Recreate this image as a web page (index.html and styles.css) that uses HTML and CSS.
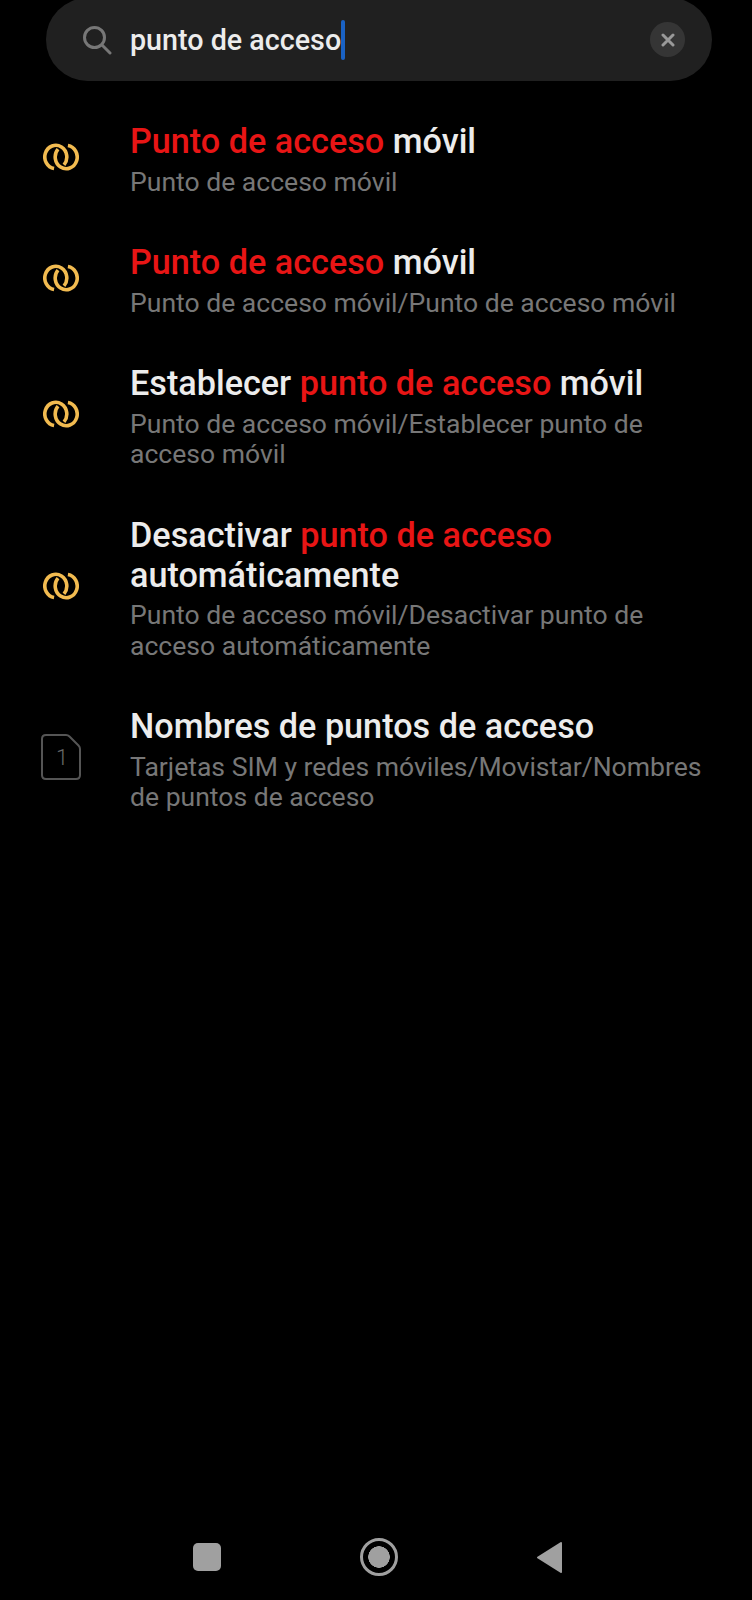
FILE: index.html
```html
<!DOCTYPE html>
<html lang="es">
<head>
    <meta charset="UTF-8">
    <meta name="viewport" content="width=device-width, initial-scale=1.0">
    <title>Buscar ajustes</title>
    <link rel="stylesheet" href="styles.css">
</head>
<body>
    <svg class="defs" width="0" height="0">
        <symbol id="rings" viewBox="0 0 36 28">
            <path d="M11.080 25.560A11 11.700 0 1 1 21 21.800M24.920 2.440A11 11.700 0 1 1 15 6.200" fill="none" stroke="currentColor" stroke-width="3.600"/>
        </symbol>
    </svg>

    <header class="search-bar">
        <svg class="search-icon" viewBox="0 0 30 30">
            <circle cx="12.500" cy="12.500" r="10" fill="none" stroke="#777" stroke-width="3"/>
            <path d="M20 20l8 8" stroke="#777" stroke-width="3" stroke-linecap="round"/>
        </svg>
        <div class="search-text">punto de acceso<span class="cursor"></span></div>
        <button class="clear-btn">
            <svg viewBox="0 0 14 14" width="14" height="14">
                <path d="M2 2l10 10M12 2L2 12" stroke="#999" stroke-width="3" stroke-linecap="round"/>
            </svg>
        </button>
    </header>

    <main class="results">
        <div class="row row-first">
            <svg class="icon-rings"><use href="#rings"/></svg>
            <div class="row-text">
                <div class="title"><span class="hit">Punto de acceso</span> móvil</div>
                <div class="path">Punto de acceso móvil</div>
            </div>
        </div>
        <div class="row">
            <svg class="icon-rings"><use href="#rings"/></svg>
            <div class="row-text">
                <div class="title"><span class="hit">Punto de acceso</span> móvil</div>
                <div class="path">Punto de acceso móvil/Punto de acceso móvil</div>
            </div>
        </div>
        <div class="row">
            <svg class="icon-rings"><use href="#rings"/></svg>
            <div class="row-text">
                <div class="title">Establecer <span class="hit">punto de acceso</span> móvil</div>
                <div class="path">Punto de acceso móvil/Establecer punto de acceso móvil</div>
            </div>
        </div>
        <div class="row">
            <svg class="icon-rings"><use href="#rings"/></svg>
            <div class="row-text">
                <div class="title">Desactivar <span class="hit">punto de acceso</span> automáticamente</div>
                <div class="path">Punto de acceso móvil/Desactivar punto de acceso automáticamente</div>
            </div>
        </div>
        <div class="row">
            <div class="icon-sim">
                <svg viewBox="0 0 40 46" width="40" height="46">
                    <path d="M5 1h20q2 0 3.500 1.500l9 9q1.500 1.500 1.500 3.500v26q0 4-4 4H5q-4 0-4-4V5q0-4 4-4z" fill="none" stroke="#555" stroke-width="2"/>
                </svg>
                <span class="sim-num">1</span>
            </div>
            <div class="row-text">
                <div class="title">Nombres de puntos de acceso</div>
                <div class="path">Tarjetas SIM y redes móviles/Movistar/Nombres de puntos de acceso</div>
            </div>
        </div>
    </main>

    <nav class="nav-bar">
        <div class="nav-square"></div>
        <div class="nav-home"></div>
        <svg class="nav-back" viewBox="0 0 27 33">
            <path d="M25 2L2 16.500 25 31z" fill="#a0a0a0" stroke="#a0a0a0" stroke-width="2" stroke-linejoin="round"/>
        </svg>
    </nav>
</body>
</html>
```

FILE: styles.css
```css
* {
    box-sizing: border-box;
}
body {
    margin: 0;
    height: 1600px;
    overflow: hidden;
    background-color: #000;
    font-family: Roboto, sans-serif;
    display: flex;
    flex-direction: column;
}
.defs {
    position: absolute;
}
.search-bar {
    height: 83px;
    margin: -2px 40px 0 46px;
    padding: 0 27px 0 36px;
    background-color: #202020;
    border-radius: 42px;
    display: flex;
    align-items: center;
    flex-shrink: 0;
}
.search-icon {
    width: 30px;
    height: 30px;
    flex-shrink: 0;
}
.search-text {
    flex: 1;
    margin-left: 18px;
    font-size: 28.700px;
    font-weight: 500;
    color: #ececec;
    display: flex;
    align-items: center;
}
.cursor {
    width: 4px;
    height: 40px;
    background-color: #1a62c4;
    border-radius: 2px;
}
.clear-btn {
    width: 35px;
    height: 35px;
    padding: 0;
    border: none;
    border-radius: 50%;
    background-color: #353535;
    display: flex;
    align-items: center;
    justify-content: center;
}
.results {
    flex: 1;
    padding: 0 40px 0 43px;
}
.row {
    display: flex;
    align-items: center;
    margin-top: 45px;
}
.row-first {
    margin-top: 40px;
}
.icon-rings {
    width: 36px;
    height: 28px;
    margin-bottom: 4px;
    color: #f2bb50;
    flex-shrink: 0;
}
.icon-sim {
    position: relative;
    width: 40px;
    height: 46px;
    margin: 0 -2px 4px -2px;
    flex-shrink: 0;
}
.sim-num {
    position: absolute;
    left: 15px;
    top: 11px;
    font-size: 22px;
    font-weight: 300;
    color: #666;
}
.row-text {
    margin-left: 51px;
}
.title {
    font-size: 34.200px;
    line-height: 40px;
    font-weight: 500;
    color: #ececec;
}
.hit {
    color: #e81515;
}
.path {
    margin-top: 5.500px;
    font-size: 26.550px;
    line-height: 30.500px;
    color: #777;
}
.nav-bar {
    height: 82px;
    padding: 0 189px 0 193px;
    display: flex;
    align-items: flex-start;
    justify-content: space-between;
    flex-shrink: 0;
}
.nav-square {
    width: 28px;
    height: 28px;
    margin-top: 25px;
    background-color: #a0a0a0;
    border-radius: 5px;
}
.nav-home {
    width: 38px;
    height: 38px;
    margin-top: 20px;
    border: 3px solid #a0a0a0;
    border-radius: 50%;
    background: radial-gradient(circle, #a0a0a0 0 10.500px, #000 11px);
}
.nav-back {
    width: 27px;
    height: 33px;
    margin-top: 23px;
}
```
